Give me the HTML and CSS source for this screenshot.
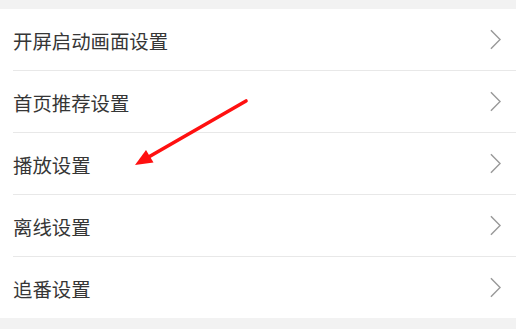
FILE: index.html
```html
<!DOCTYPE html>
<html lang="zh">
<head>
<meta charset="utf-8">
<link rel="stylesheet" href="styles.css">
</head>
<body>
<div class="page">
  <ul class="list">
    <li class="row"><span class="label">开屏启动画面设置</span><svg class="chev" viewBox="0 0 12 22"><path d="M1 1 L11 11 L1 21"/></svg></li>
    <li class="row"><span class="label">首页推荐设置</span><svg class="chev" viewBox="0 0 12 22"><path d="M1 1 L11 11 L1 21"/></svg></li>
    <li class="row"><span class="label">播放设置</span><svg class="chev" viewBox="0 0 12 22"><path d="M1 1 L11 11 L1 21"/></svg></li>
    <li class="row"><span class="label">离线设置</span><svg class="chev" viewBox="0 0 12 22"><path d="M1 1 L11 11 L1 21"/></svg></li>
    <li class="row"><span class="label">追番设置</span><svg class="chev" viewBox="0 0 12 22"><path d="M1 1 L11 11 L1 21"/></svg></li>
  </ul>
  <svg class="arrow" viewBox="0 0 516 329">
    <line x1="246" y1="101" x2="146" y2="158.5"/>
    <polygon points="135,165 153.5,162.5 146,150"/>
  </svg>
</div>
</body>
</html>
```

FILE: styles.css
```css
html, body {
  margin: 0;
  padding: 0;
  background: #f2f2f2;
}
body {
  width: 516px;
  height: 329px;
  overflow: hidden;
  font-family: "Noto Sans CJK SC", "Noto Sans", sans-serif;
}
.page {
  position: relative;
  width: 516px;
  height: 329px;
  padding-top: 9px;
  box-sizing: border-box;
}
.list {
  list-style: none;
  margin: 0;
  padding: 0 0 0 13px;
  background: #fff;
}
.row {
  height: 61px;
  display: flex;
  align-items: center;
  justify-content: space-between;
  padding-right: 15px;
  border-bottom: 1px solid #e8e8e8;
}
.row:last-child {
  border-bottom: none;
}
.label {
  font-size: 19.4px;
  color: #363636;
  line-height: 1;
  padding-top: 2px;
}
.chev {
  width: 11px;
  height: 21px;
  fill: none;
  stroke: #999;
  stroke-width: 1.6;
}
.arrow {
  position: absolute;
  left: 0;
  top: 0;
  width: 516px;
  height: 329px;
  pointer-events: none;
}
.arrow line {
  stroke: #ff1010;
  stroke-width: 3.6;
  stroke-linecap: round;
}
.arrow polygon {
  fill: #ff1010;
}
```
